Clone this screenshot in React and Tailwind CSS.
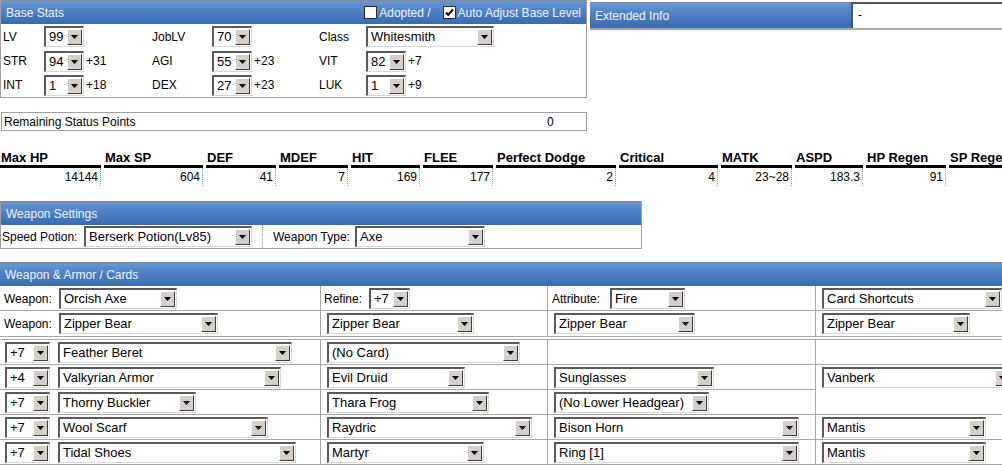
import React from 'react';

const font = "font-['Liberation_Sans',Arial,sans-serif]";

function Arrow() {
  return (
    <svg width="7" height="4" viewBox="0 0 7 4">
      <path d="M0 0h7L3.5 4z" fill="#000" />
    </svg>
  );
}

function Sel({ v, className = '' }) {
  return (
    <div
      className={`inline-flex h-[21px] shrink-0 items-stretch bg-white border-t-2 border-l-2 border-b border-r border-t-[#5a5a5a] border-l-[#5a5a5a] border-b-[#d8d8d8] border-r-[#d8d8d8] ${className}`}
    >
      <span className="flex-1 overflow-hidden whitespace-nowrap pl-[3px] text-[13px] leading-[18px] text-black">{v}</span>
      <span className="my-[1px] mr-[1px] flex w-[15px] items-center justify-center bg-[#d4d0c8] border border-t-white border-l-white border-b-[#404040] border-r-[#404040]">
        <Arrow />
      </span>
    </div>
  );
}

function Check({ on }) {
  return (
    <span className="inline-flex h-[13px] w-[13px] items-center justify-center border border-[#2b2b2b] bg-white">
      {on && (
        <svg width="9" height="9" viewBox="0 0 9 9">
          <path d="M1 4.5l2.2 2.3L8 1.5" stroke="#000" strokeWidth="2" fill="none" />
        </svg>
      )}
    </span>
  );
}

function Head({ children, className = '' }) {
  return (
    <div
      className={`flex h-[24px] items-center px-[5px] text-[12px] text-[#eef4ff] bg-linear-to-b from-[#6797d4] via-[#4a7fc2] to-[#3a6bb0] border-t border-[#8a8a8a] ${className}`}
    >
      {children}
    </div>
  );
}

const stats = [
  ['Max HP', '14144', 'w-[101px]'],
  ['Max SP', '604', 'w-[99px]'],
  ['DEF', '41', 'w-[70px]'],
  ['MDEF', '7', 'w-[69px]'],
  ['HIT', '169', 'w-[69px]'],
  ['FLEE', '177', 'w-[70px]'],
  ['Perfect Dodge', '2', 'w-[120px]'],
  ['Critical', '4', 'w-[99px]'],
  ['MATK', '23~28', 'w-[71px]'],
  ['ASPD', '183.3', 'w-[68px]'],
  ['HP Regen', '91', 'w-[80px]'],
  ['SP Regen', '', 'w-[80px]'],
];

function Bonus({ children }) {
  return <span className="ml-[2px] text-[12px]">{children}</span>;
}

const cell = 'flex h-[25px] items-start pt-[2px] border-b border-[#a8a8a8]';

export default function App() {
  return (
    <div className={`${font} h-[467px] w-[1002px] overflow-hidden bg-white text-[12px] text-black`}>
      {/* top row */}
      <div className="flex">
        <div className="h-[98px] w-[587px] shrink-0 border-x border-b border-[#a0a0a0]">
          <Head>
            <span className="flex-1">Base Stats</span>
            <span className="flex items-center">
              <Check />
              <span className="ml-[2px]">Adopted /</span>
              <span className="ml-[12px]" />
              <Check on />
              <span className="ml-[2px]">Auto Adjust Base Level</span>
            </span>
          </Head>
          <div className="grid grid-cols-[43px_108px_60px_107px_47px_1fr] grid-rows-[25px_24px_24px] items-center">
            <span className="pl-[2px]">LV</span>
            <div className="flex items-center"><Sel v="99" className="w-[40px]" /></div>
            <span>JobLV</span>
            <div className="flex items-center"><Sel v="70" className="w-[40px]" /></div>
            <span>Class</span>
            <div className="flex items-center"><Sel v="Whitesmith" className="w-[128px]" /></div>

            <span className="pl-[2px]">STR</span>
            <div className="flex items-center"><Sel v="94" className="w-[40px]" /><Bonus>+31</Bonus></div>
            <span>AGI</span>
            <div className="flex items-center"><Sel v="55" className="w-[40px]" /><Bonus>+23</Bonus></div>
            <span>VIT</span>
            <div className="flex items-center"><Sel v="82" className="w-[40px]" /><Bonus>+7</Bonus></div>

            <span className="pl-[2px]">INT</span>
            <div className="flex items-center"><Sel v="1" className="w-[40px]" /><Bonus>+18</Bonus></div>
            <span>DEX</span>
            <div className="flex items-center"><Sel v="27" className="w-[40px]" /><Bonus>+23</Bonus></div>
            <span>LUK</span>
            <div className="flex items-center"><Sel v="1" className="w-[40px]" /><Bonus>+9</Bonus></div>
          </div>
        </div>

        <div className="ml-[3px] mt-[2px] flex h-[28px] flex-1 border-b-2 border-[#a8a8a8]">
          <Head className="w-[261px] shrink-0 h-[26px]">Extended Info</Head>
          <div className="flex-1 border-t-2 border-l-2 border-t-[#555] border-l-[#555] bg-white pl-[5px] text-[12px] leading-[22px]">-</div>
        </div>
      </div>

      {/* remaining */}
      <div className="ml-[1px] mt-[14px] flex h-[19px] w-[586px] items-center border border-[#a0a0a0]">
        <span className="w-[545px] pl-[2px]">Remaining Status Points</span>
        <span>0</span>
      </div>

      {/* stats */}
      <div className="mt-[19px] flex gap-[3px]">
        {stats.map(([h, v, w]) => (
          <div key={h} className={`${w} shrink-0`}>
            <div className="whitespace-nowrap border-b-[3px] border-black pl-[1px] text-[13px] font-bold leading-[15px]">{h}</div>
            <div className="h-[18px] border-r border-dotted border-[#999] pr-[2px] text-right leading-[18px]">{v}</div>
          </div>
        ))}
      </div>

      {/* weapon settings */}
      <div className="mt-[15px] w-[642px] border-x border-b border-[#a0a0a0]">
        <Head>Weapon Settings</Head>
        <div className="flex h-[23px] items-center">
          <span className="w-[83px] pl-[1px]">Speed Potion:</span>
          <Sel v="Berserk Potion(Lv85)" className="w-[168px]" />
          <div className="ml-[10px] flex h-full items-center border-l border-dotted border-[#999] pl-[10px]">
            <span className="w-[82px]">Weapon Type:</span>
            <Sel v="Axe" className="w-[130px]" />
          </div>
        </div>
      </div>

      {/* weapon & armor */}
      <div className="mt-[13px] w-[1010px]">
        <Head className="w-[1010px]">Weapon &amp; Armor / Cards</Head>
        <div className="grid grid-cols-[320px_227px_268px_195px] border-b border-[#a8a8a8]">
          <div className={`${cell} pl-[4px]`}>
            <span className="w-[55px] pt-[2px]">Weapon:</span>
            <Sel v="Orcish Axe" className="w-[118px]" />
          </div>
          <div className={`${cell} border-l pl-[3px]`}>
            <span className="w-[45px] pt-[2px]">Refine:</span>
            <Sel v="+7" className="w-[41px]" />
          </div>
          <div className={`${cell} border-l pl-[4px]`}>
            <span className="w-[58px] pt-[2px]">Attribute:</span>
            <Sel v="Fire" className="w-[75px]" />
          </div>
          <div className={`${cell} border-l pl-[6px]`}>
            <Sel v="Card Shortcuts" className="w-[180px]" />
          </div>

          <div className="flex h-[25px] items-start pt-[2px] pl-[4px]">
            <span className="w-[55px] pt-[2px]">Weapon:</span>
            <Sel v="Zipper Bear" className="w-[159px]" />
          </div>
          <div className="flex h-[25px] items-start pt-[2px] border-l border-[#a8a8a8] pl-[6px]">
            <Sel v="Zipper Bear" className="w-[147px]" />
          </div>
          <div className="flex h-[25px] items-start pt-[2px] border-l border-[#a8a8a8] pl-[6px]">
            <Sel v="Zipper Bear" className="w-[141px]" />
          </div>
          <div className="flex h-[25px] items-start pt-[2px] border-l border-[#a8a8a8] pl-[6px]">
            <Sel v="Zipper Bear" className="w-[148px]" />
          </div>
        </div>

        <div className="mt-[2px] grid grid-cols-[320px_227px_268px_195px] grid-rows-[25px_25px_25px_25px_25px] border-t border-[#a8a8a8]">
          {/* row 1 */}
          <div className={`${cell} gap-[8px] pl-[5px]`}>
            <Sel v="+7" className="w-[45px]" />
            <Sel v="Feather Beret" className="w-[234px]" />
          </div>
          <div className={`${cell} border-l pl-[6px]`}><Sel v="(No Card)" className="w-[193px]" /></div>
          <div className={`${cell} border-l`} />
          <div className={`${cell} border-l`} />

          {/* row 2 */}
          <div className={`${cell} gap-[8px] pl-[5px]`}>
            <Sel v="+4" className="w-[45px]" />
            <Sel v="Valkyrian Armor" className="w-[223px]" />
          </div>
          <div className={`${cell} border-l pl-[6px]`}><Sel v="Evil Druid" className="w-[138px]" /></div>
          <div className={`${cell} border-l pl-[6px]`}><Sel v="Sunglasses" className="w-[160px]" /></div>
          <div className="row-span-2 flex items-start pt-[2px] border-l border-b border-[#a8a8a8] pl-[6px]">
            <Sel v="Vanberk" className="w-[190px]" />
          </div>

          {/* row 3 */}
          <div className={`${cell} gap-[8px] pl-[5px]`}>
            <Sel v="+7" className="w-[45px]" />
            <Sel v="Thorny Buckler" className="w-[138px]" />
          </div>
          <div className={`${cell} border-l pl-[6px]`}><Sel v="Thara Frog" className="w-[162px]" /></div>
          <div className={`${cell} border-l pl-[6px]`}><Sel v="(No Lower Headgear)" className="w-[155px]" /></div>

          {/* row 4 */}
          <div className={`${cell} gap-[8px] pl-[5px]`}>
            <Sel v="+7" className="w-[45px]" />
            <Sel v="Wool Scarf" className="w-[210px]" />
          </div>
          <div className={`${cell} border-l pl-[6px]`}><Sel v="Raydric" className="w-[205px]" /></div>
          <div className={`${cell} border-l pl-[6px]`}><Sel v="Bison Horn" className="w-[245px]" /></div>
          <div className={`${cell} border-l pl-[6px]`}><Sel v="Mantis" className="w-[164px]" /></div>

          {/* row 5 */}
          <div className={`${cell} gap-[8px] pl-[5px]`}>
            <Sel v="+7" className="w-[45px]" />
            <Sel v="Tidal Shoes" className="w-[238px]" />
          </div>
          <div className={`${cell} border-l pl-[6px]`}><Sel v="Martyr" className="w-[157px]" /></div>
          <div className={`${cell} border-l pl-[6px]`}><Sel v="Ring [1]" className="w-[245px]" /></div>
          <div className={`${cell} border-l pl-[6px]`}><Sel v="Mantis" className="w-[164px]" /></div>
        </div>
      </div>
    </div>
  );
}
